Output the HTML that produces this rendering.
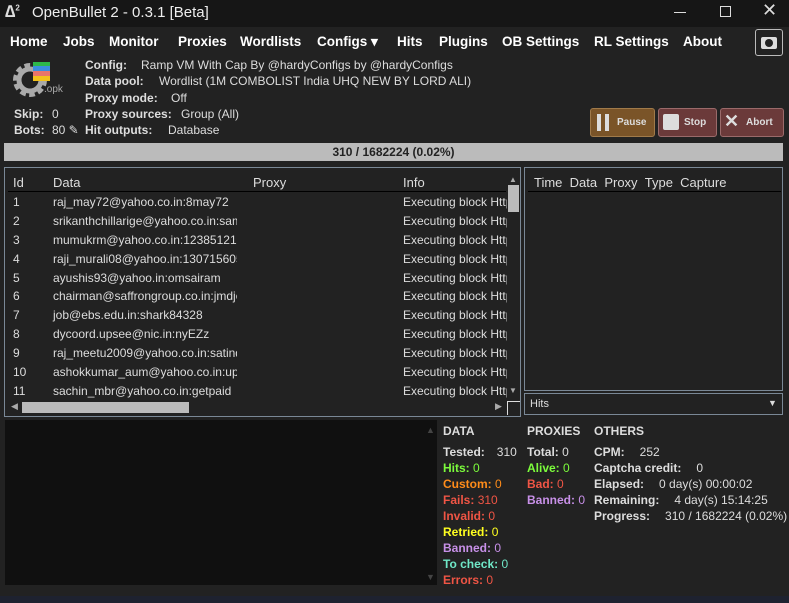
<!DOCTYPE html>
<html><head><meta charset="utf-8"><style>
*{margin:0;padding:0;box-sizing:border-box}
body{width:789px;height:603px;background:#222;color:#ddd;font-family:"Liberation Sans",sans-serif;font-size:12px;position:relative;overflow:hidden}
.a{position:absolute;white-space:nowrap}
.b{font-weight:bold}
.nav span{position:absolute;top:34px;font-weight:bold;font-size:13.5px;color:#fff}
.row{position:absolute;left:13px;height:19px;width:494px;font-size:12px}
.row span{position:absolute;top:0;white-space:nowrap}
.st{position:absolute;font-weight:bold;font-size:12px;white-space:nowrap}
</style></head><body>
<div class="a" style="left:0;top:0;width:789px;height:27px;background:#161616"></div>
<div class="a" style="left:5px;top:2px;font-size:17px;color:#ddd;font-weight:bold">&#x2206;<sup style="font-size:8px">2</sup></div>
<div class="a" style="left:32px;top:4px;font-size:15px;color:#eee">OpenBullet 2 - 0.3.1 [Beta]</div>
<div class="a" style="left:674px;top:12px;width:12px;height:1px;background:#ddd"></div>
<div class="a" style="left:720px;top:6px;width:11px;height:11px;border:1px solid #ddd"></div>
<div class="a" style="left:762px;top:0px;font-size:18px;color:#ddd">&#x2715;</div>
<div class="nav">
<span style="left:10px">Home</span><span style="left:63px">Jobs</span><span style="left:109px">Monitor</span><span style="left:178px">Proxies</span><span style="left:240px">Wordlists</span><span style="left:317px">Configs ▾</span><span style="left:397px">Hits</span><span style="left:439px">Plugins</span><span style="left:502px">OB Settings</span><span style="left:594px">RL Settings</span><span style="left:683px">About</span>
</div>
<div class="a" style="left:755px;top:29px;width:28px;height:27px;border:1px solid #bbb;border-radius:3px"></div>
<div class="a" style="left:761px;top:37px;width:16px;height:12px;background:#ddd;border-radius:2px"></div>
<div class="a" style="left:765px;top:39px;width:8px;height:8px;background:#222;border-radius:50%"></div>
<svg class="a" style="left:12px;top:60px" width="52" height="44"><circle cx="18" cy="20" r="13" fill="none" stroke="#aaa" stroke-width="8" stroke-dasharray="5 3"/><circle cx="18" cy="20" r="11" fill="none" stroke="#aaa" stroke-width="5"/><rect x="21" y="2" width="30" height="17" fill="#222"/></svg>
<div class="a" style="left:33px;top:62px;width:17px;height:5px;background:#2db84a"></div>
<div class="a" style="left:33px;top:66px;width:17px;height:5px;background:#3b8ede"></div>
<div class="a" style="left:33px;top:71px;width:17px;height:5px;background:#e9756a"></div>
<div class="a" style="left:33px;top:76px;width:17px;height:5px;background:#f3c21b"></div>
<div class="a" style="left:44px;top:84px;font-size:10px;color:#aaa">.opk</div>
<div class="a b" style="left:14px;top:107px">Skip:</div><div class="a" style="left:52px;top:107px">0</div>
<div class="a b" style="left:14px;top:123px">Bots:</div><div class="a" style="left:52px;top:123px">80 ✎</div>
<div class="a b" style="left:85px;top:58px">Config:</div><div class="a" style="left:141px;top:58px">Ramp VM With Cap By @hardyConfigs by @hardyConfigs</div>
<div class="a b" style="left:85px;top:74px">Data pool:</div><div class="a" style="left:159px;top:74px">Wordlist (1M COMBOLIST India UHQ NEW BY LORD ALI)</div>
<div class="a b" style="left:85px;top:91px">Proxy mode:</div><div class="a" style="left:171px;top:91px">Off</div>
<div class="a b" style="left:85px;top:107px">Proxy sources:</div><div class="a" style="left:181px;top:107px">Group (All)</div>
<div class="a b" style="left:85px;top:123px">Hit outputs:</div><div class="a" style="left:168px;top:123px">Database</div>
<div class="a" style="left:590px;top:108px;width:65px;height:29px;background:#7a5428;border:1px solid #a07a4a;border-radius:3px"></div>
<div class="a" style="left:597px;top:114px;width:4px;height:17px;background:#ddd"></div><div class="a" style="left:605px;top:114px;width:4px;height:17px;background:#ddd"></div>
<div class="a b" style="left:617px;top:117px;font-size:10px">Pause</div>
<div class="a" style="left:658px;top:108px;width:59px;height:29px;background:#6b3a3a;border:1px solid #9a6a6a;border-radius:3px"></div>
<div class="a" style="left:663px;top:114px;width:16px;height:16px;background:#ddd;border-radius:2px"></div>
<div class="a b" style="left:684px;top:117px;font-size:10px">Stop</div>
<div class="a" style="left:720px;top:108px;width:64px;height:29px;background:#6b3a3a;border:1px solid #9a6a6a;border-radius:3px"></div>
<div class="a b" style="left:724px;top:111px;font-size:18px;color:#ddd">✕</div>
<div class="a b" style="left:746px;top:117px;font-size:10px">Abort</div>
<div class="a" style="left:4px;top:143px;width:779px;height:18px;background:#bbb;color:#222;font-weight:bold;text-align:center;line-height:18px">310 / 1682224 (0.02%)</div>
<div class="a" style="left:4px;top:167px;width:517px;height:250px;border:1px solid #7a8896"></div>
<div class="a" style="left:8px;top:191px;width:498px;height:1px;background:#000"></div>
<div class="row" style="top:175px;font-size:13px"><span style="left:0">Id</span><span style="left:40px">Data</span><span style="left:240px">Proxy</span><span style="left:390px">Info</span></div>
<div class="row" style="top:195px"><span style="left:0">1</span><span style="left:40px">raj_may72@yahoo.co.in:8may72</span><span style="left:390px">Executing block Http</span></div>
<div class="row" style="top:214px"><span style="left:0">2</span><span style="left:40px">srikanthchillarige@yahoo.co.in:same</span><span style="left:390px">Executing block Http</span></div>
<div class="row" style="top:233px"><span style="left:0">3</span><span style="left:40px">mumukrm@yahoo.co.in:123851212</span><span style="left:390px">Executing block Http</span></div>
<div class="row" style="top:252px"><span style="left:0">4</span><span style="left:40px">raji_murali08@yahoo.in:1307156056</span><span style="left:390px">Executing block Http</span></div>
<div class="row" style="top:271px"><span style="left:0">5</span><span style="left:40px">ayushis93@yahoo.in:omsairam</span><span style="left:390px">Executing block Http</span></div>
<div class="row" style="top:289px"><span style="left:0">6</span><span style="left:40px">chairman@saffrongroup.co.in:jmdje</span><span style="left:390px">Executing block Http</span></div>
<div class="row" style="top:308px"><span style="left:0">7</span><span style="left:40px">job@ebs.edu.in:shark84328</span><span style="left:390px">Executing block Http</span></div>
<div class="row" style="top:327px"><span style="left:0">8</span><span style="left:40px">dycoord.upsee@nic.in:nyEZz</span><span style="left:390px">Executing block Http</span></div>
<div class="row" style="top:346px"><span style="left:0">9</span><span style="left:40px">raj_meetu2009@yahoo.co.in:satinde</span><span style="left:390px">Executing block Http</span></div>
<div class="row" style="top:365px"><span style="left:0">10</span><span style="left:40px">ashokkumar_aum@yahoo.co.in:upp</span><span style="left:390px">Executing block Http</span></div>
<div class="row" style="top:384px"><span style="left:0">11</span><span style="left:40px">sachin_mbr@yahoo.co.in:getpaid</span><span style="left:390px">Executing block Http</span></div>
<div class="a" style="left:237px;top:195px;width:166px;height:208px;background:#222"></div>
<div class="a" style="left:507px;top:168px;width:13px;height:232px;background:#222"></div>
<div class="a" style="left:508px;top:185px;width:11px;height:27px;background:#bbb"></div>
<div class="a" style="left:509px;top:175px;font-size:8px;color:#aaa">▲</div>
<div class="a" style="left:509px;top:386px;font-size:8px;color:#aaa">▼</div>
<div class="a" style="left:5px;top:399px;width:502px;height:17px;background:#222"></div>
<div class="a" style="left:22px;top:402px;width:167px;height:11px;background:#bbb"></div>
<div class="a" style="left:11px;top:401px;font-size:9px;color:#aaa">◀</div>
<div class="a" style="left:495px;top:401px;font-size:9px;color:#aaa">▶</div>
<div class="a" style="left:507px;top:401px;width:13px;height:14px;border-left:1px solid #ddd;border-top:1px solid #ddd"></div>
<div class="a" style="left:524px;top:167px;width:259px;height:224px;border:1px solid #7a8896"></div>
<div class="a" style="left:534px;top:175px;font-size:13px">Time&nbsp;&nbsp;Data&nbsp;&nbsp;Proxy&nbsp;&nbsp;Type&nbsp;&nbsp;Capture</div>
<div class="a" style="left:528px;top:191px;width:253px;height:1px;background:#000"></div>
<div class="a" style="left:524px;top:393px;width:259px;height:22px;border:1px solid #7a8896"></div>
<div class="a" style="left:530px;top:398px;font-size:11px">Hits</div>
<div class="a" style="left:768px;top:398px;font-size:9px">▼</div>
<div class="a" style="left:5px;top:420px;width:432px;height:165px;background:#101010"></div>
<div class="a" style="left:426px;top:425px;font-size:9px;color:#444">▲</div>
<div class="a" style="left:426px;top:572px;font-size:9px;color:#444">▼</div>
<div class="st" style="left:443px;top:424px;color:#ddd">DATA</div>
<div class="st" style="left:443px;top:445px;color:#ddd">Tested:<span style="font-weight:normal;margin-left:12px">310</span></div>
<div class="st" style="left:443px;top:461px;color:#7cfc3c">Hits: <span style="font-weight:normal">0</span></div>
<div class="st" style="left:443px;top:477px;color:#ff8c1a">Custom: <span style="font-weight:normal">0</span></div>
<div class="st" style="left:443px;top:493px;color:#f05545">Fails: <span style="font-weight:normal">310</span></div>
<div class="st" style="left:443px;top:509px;color:#f05545">Invalid: <span style="font-weight:normal">0</span></div>
<div class="st" style="left:443px;top:525px;color:#ffff20">Retried: <span style="font-weight:normal">0</span></div>
<div class="st" style="left:443px;top:541px;color:#c890e8">Banned: <span style="font-weight:normal">0</span></div>
<div class="st" style="left:443px;top:557px;color:#70e8c8">To check: <span style="font-weight:normal">0</span></div>
<div class="st" style="left:443px;top:573px;color:#f05545">Errors: <span style="font-weight:normal">0</span></div>
<div class="st" style="left:527px;top:424px;color:#ddd">PROXIES</div>
<div class="st" style="left:527px;top:445px;color:#ddd">Total: <span style="font-weight:normal">0</span></div>
<div class="st" style="left:527px;top:461px;color:#7cfc3c">Alive: <span style="font-weight:normal">0</span></div>
<div class="st" style="left:527px;top:477px;color:#f05545">Bad: <span style="font-weight:normal">0</span></div>
<div class="st" style="left:527px;top:493px;color:#c890e8">Banned: <span style="font-weight:normal">0</span></div>
<div class="st" style="left:594px;top:424px;color:#ddd">OTHERS</div>
<div class="st" style="left:594px;top:445px;color:#ddd">CPM:<span style="font-weight:normal;margin-left:15px">252</span></div>
<div class="st" style="left:594px;top:461px;color:#ddd">Captcha credit:<span style="font-weight:normal;margin-left:15px">0</span></div>
<div class="st" style="left:594px;top:477px;color:#ddd">Elapsed:<span style="font-weight:normal;margin-left:15px">0 day(s) 00:00:02</span></div>
<div class="st" style="left:594px;top:493px;color:#ddd">Remaining:<span style="font-weight:normal;margin-left:15px">4 day(s) 15:14:25</span></div>
<div class="st" style="left:594px;top:509px;color:#ddd">Progress:<span style="font-weight:normal;margin-left:15px">310 / 1682224 (0.02%)</span></div>
<div class="a" style="left:0;top:596px;width:789px;height:7px;background:#1e2230"></div>
</body></html>
